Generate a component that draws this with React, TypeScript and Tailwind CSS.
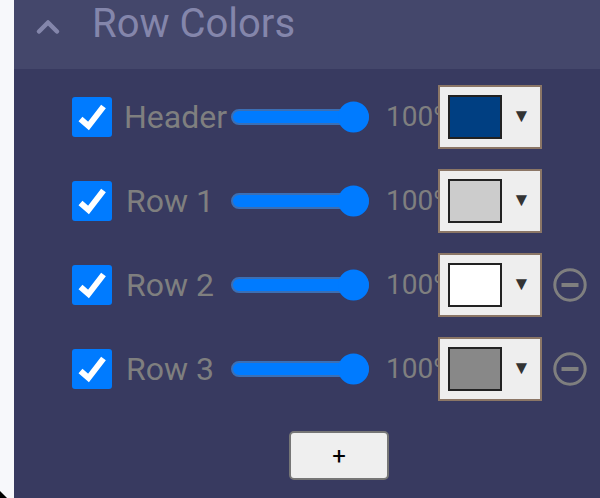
import { ChevronUp } from "lucide-react";

type Row = { label: string; color: string; removable?: boolean; labelClass: string };

const rows: Row[] = [
  { label: "Header", color: "bg-[#003f82]", labelClass: "pl-[12px]" },
  { label: "Row 1", color: "bg-[#cccccc]", labelClass: "pl-[14px]" },
  { label: "Row 2", color: "bg-white", removable: true, labelClass: "pl-[14px]" },
  { label: "Row 3", color: "bg-[#888888]", removable: true, labelClass: "pl-[14px]" },
];

function Checkbox() {
  return (
    <div className="flex h-10 w-10 shrink-0 items-center justify-center rounded-[3px] bg-[#007bff]">
      <svg width="30" height="30" viewBox="0 0 30 30" fill="none">
        <path d="M3.5 17 L11.5 24 L26.5 4.5" stroke="#fff" strokeWidth="6" />
      </svg>
    </div>
  );
}

function Slider() {
  return (
    <div className="relative h-4 w-[138px] shrink-0 rounded-full border-2 border-[#3b6fb5] bg-[#007bff]">
      <div className="absolute -right-[2px] top-1/2 h-[31px] w-[31px] -translate-y-1/2 rounded-full bg-[#007bff]" />
    </div>
  );
}

function ColorSelect({ color }: { color: string }) {
  return (
    <div className="flex h-16 w-[104px] shrink-0 items-center border-2 border-[#8b7666] bg-[#eeeeee] pl-2">
      <div className={`h-11 w-[54px] border-2 border-[#222222] ${color}`} />
      <span className="-mt-[4px] ml-[10px] text-[19px] leading-none text-[#333333]">▼</span>
    </div>
  );
}

function RemoveIcon() {
  return (
    <svg width="34" height="34" viewBox="0 0 34 34" fill="none" stroke="#7f7f7f" strokeWidth="3">
      <circle cx="17" cy="17" r="15.2" />
      <path d="M8.5 17 H25.5" strokeWidth="4" />
    </svg>
  );
}

export default function App() {
  return (
    <div className="relative h-[498px] w-[600px] overflow-hidden bg-[#f7f8fb] pl-[14px] font-['Roboto',sans-serif]">
      <div className="h-full bg-[#383a60]">
        <div className="flex h-[69px] items-start bg-[#44476b] pl-[16px]">
          <ChevronUp className="mt-[9px] h-[36px] w-[36px] text-[#8486ab]" strokeWidth={3} />
          <h2 className="ml-[26px] mt-[1px] text-[40px] leading-[46px] text-[#8486ab]">Row Colors</h2>
        </div>
        <div className="flex flex-col gap-5 pl-[58px] pt-4">
          {rows.map((row) => (
            <div key={row.label} className="flex h-16 items-center">
              <Checkbox />
              <span className={`w-[119px] shrink-0 whitespace-nowrap text-[32px] text-[#7f7f7f] ${row.labelClass}`}>{row.label}</span>
              <Slider />
              <div className="ml-[17px] w-[52px] shrink-0 overflow-hidden whitespace-nowrap text-[28px] text-[#7f7f7f]">100%</div>
              <ColorSelect color={row.color} />
              {row.removable && (
                <div className="ml-[11px] shrink-0">
                  <RemoveIcon />
                </div>
              )}
            </div>
          ))}
        </div>
        <div className="ml-[275px] mt-[30px] flex h-[49px] w-[100px] items-center justify-center rounded-[5px] border-2 border-[#767676] bg-[#efefef] text-[24px] text-black">
          +
        </div>
      </div>
      <svg className="absolute bottom-0 left-0" width="8" height="8" viewBox="0 0 8 8">
        <path d="M0 1 L7 8 H0 Z" fill="#000" />
      </svg>
    </div>
  );
}
